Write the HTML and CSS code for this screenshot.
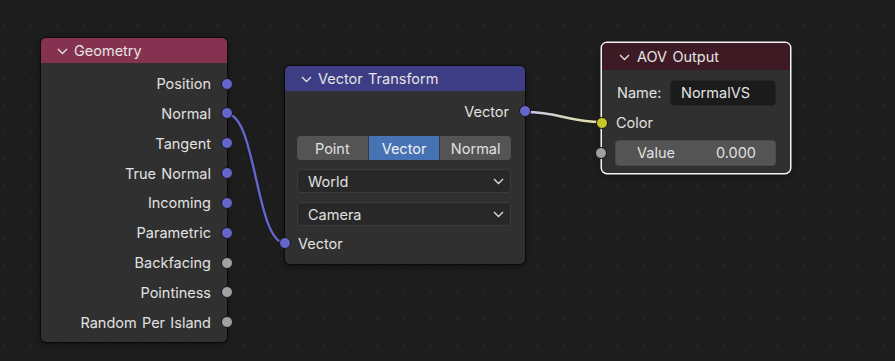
FILE: index.html
```html
<!DOCTYPE html>
<html>
<head>
<meta charset="utf-8">
<link rel="stylesheet" href="styles.css">
</head>
<body>
<div class="canvas">
  <svg class="links" width="895" height="361" viewBox="0 0 895 361">
    <defs>
      <linearGradient id="lg" x1="525" y1="0" x2="602" y2="0" gradientUnits="userSpaceOnUse">
        <stop offset="0" stop-color="#c6c6ee"/>
        <stop offset="1" stop-color="#e4e49c"/>
      </linearGradient>
    </defs>
    <path d="M227 114 C 256 114, 256 243, 285 243" stroke="#1a1a1a" stroke-width="4" fill="none"/>
    <path d="M227 114 C 256 114, 256 243, 285 243" stroke="#6565cc" stroke-width="2.4" fill="none"/>
    <path d="M525 112 C 560 112, 567 122, 602 122" stroke="#1a1a1a" stroke-width="4.5" fill="none"/>
    <path d="M525 112 C 560 112, 567 122, 602 122" stroke="url(#lg)" stroke-width="2.6" fill="none"/>
  </svg>

  <div class="node geometry">
    <div class="head head-input">
      <svg class="chev" width="11" height="7" viewBox="0 0 11 7"><polyline points="1,1 5.5,5.5 10,1" fill="none" stroke="#e0e0e0" stroke-width="1.4"/></svg>
      <span>Geometry</span>
    </div>
    <div class="body geo-body">
      <div class="row out">Position<i class="sock vec"></i></div>
      <div class="row out">Normal<i class="sock vec"></i></div>
      <div class="row out">Tangent<i class="sock vec"></i></div>
      <div class="row out">True Normal<i class="sock vec"></i></div>
      <div class="row out">Incoming<i class="sock vec"></i></div>
      <div class="row out">Parametric<i class="sock vec"></i></div>
      <div class="row out">Backfacing<i class="sock flt"></i></div>
      <div class="row out">Pointiness<i class="sock flt"></i></div>
      <div class="row out">Random Per Island<i class="sock flt"></i></div>
    </div>
  </div>

  <div class="node vtrans">
    <div class="head head-vector">
      <svg class="chev" width="11" height="7" viewBox="0 0 11 7"><polyline points="1,1 5.5,5.5 10,1" fill="none" stroke="#e0e0e0" stroke-width="1.4"/></svg>
      <span>Vector Transform</span>
    </div>
    <div class="body vt-body">
      <div class="row out">Vector<i class="sock vec"></i></div>
      <div class="seg">
        <div class="segbtn">Point</div>
        <div class="segbtn active">Vector</div>
        <div class="segbtn">Normal</div>
      </div>
      <div class="drop first">World<svg width="11" height="7" viewBox="0 0 11 7"><polyline points="1,1 5.5,5.5 10,1" fill="none" stroke="#d8d8d8" stroke-width="1.4"/></svg></div>
      <div class="drop">Camera<svg width="11" height="7" viewBox="0 0 11 7"><polyline points="1,1 5.5,5.5 10,1" fill="none" stroke="#d8d8d8" stroke-width="1.4"/></svg></div>
      <div class="row in">Vector<i class="sock vec"></i></div>
    </div>
  </div>

  <div class="node aov">
    <div class="head head-output">
      <svg class="chev" width="11" height="7" viewBox="0 0 11 7"><polyline points="1,1 5.5,5.5 10,1" fill="none" stroke="#e0e0e0" stroke-width="1.4"/></svg>
      <span>AOV Output</span>
    </div>
    <div class="body aov-body">
      <div class="namerow"><span>Name:</span><div class="textfield">NormalVS</div></div>
      <div class="row in">Color<i class="sock col"></i></div>
      <div class="valrow"><div class="valfield"><span>Value</span><span>0.000</span></div><i class="sock flt"></i></div>
    </div>
  </div>
</div>
</body>
</html>
```

FILE: styles.css
```css
html, body {
  margin: 0;
  padding: 0;
}
body {
  width: 895px;
  height: 361px;
  overflow: hidden;
  background-color: #1d1d1d;
  background-image: radial-gradient(circle, #272727 0.9px, rgba(0,0,0,0) 1.4px);
  background-size: 26.67px 26.67px;
  background-position: -9px 12px;
  font-family: Inter, "Noto Sans", sans-serif;
  font-size: 14.5px;
  word-spacing: 1.2px;
  color: #e2e2e2;
}
.canvas {
  position: relative;
  width: 895px;
  height: 361px;
}
.links {
  position: absolute;
  left: 0;
  top: 0;
  z-index: 2;
  pointer-events: none;
}
.node {
  position: absolute;
  background: #303030;
  border-radius: 5px;
  box-shadow: 0 0 1px 1px rgba(0,0,0,0.55), 0 2px 6px rgba(0,0,0,0.45);
  display: flex;
  flex-direction: column;
  box-sizing: border-box;
}
.geometry { left: 41px; top: 38px; width: 186px; height: 304px; }
.vtrans { left: 285px; top: 66px; width: 240px; height: 198px; }
.aov {
  left: 602px; top: 43px; width: 188px; height: 130px;
  box-shadow: 0 0 0 1.5px #f4f4f4, 0 2px 6px rgba(0,0,0,0.5);
}
.head {
  height: 25px;
  display: flex;
  align-items: center;
  border-radius: 5px 5px 0 0;
  padding-left: 16px;
  gap: 6px;
  color: #e4e4e4;
  flex-shrink: 0;
}
.head .chev { margin-top: 1px; }
.head-input { background: #853250; }
.head-vector { background: #3d3d85; }
.head-output { background: #3e1b24; height: 27px; padding-left: 17px; gap: 7px; }
.body {
  position: relative;
  display: flex;
  flex-direction: column;
}
.geo-body { padding-top: 5.6px; }
.row {
  height: 29.85px;
  display: flex;
  align-items: center;
  position: relative;
}
.row.out {
  justify-content: flex-end;
  padding-right: 16px;
}
.row.in {
  padding-left: 13px;
}
.sock {
  position: absolute;
  width: 10px;
  height: 10px;
  border-radius: 50%;
  border: 1px solid #151515;
  top: 50%;
  margin-top: -6px;
  z-index: 3;
}
.row.out .sock { right: -6px; }
.row.in .sock { left: -6px; }
.vec { background: #6565cc; }
.flt { background: #a1a1a1; }
.col { background: #c7c729; }

.vt-body { padding-top: 5px; }
.vt-body .row { height: 30px; }
.seg {
  display: flex;
  margin: 10px 14px 0 12px;
  height: 24px;
  border-radius: 4px;
  overflow: hidden;
  background: #3a3a3a;
  gap: 1px;
}
.segbtn {
  flex: 1;
  background: #545454;
  display: flex;
  align-items: center;
  justify-content: center;
  color: #e0e0e0;
}
.segbtn.active {
  background: #4772b3;
  color: #f2f2f2;
}
.drop {
  margin: 9px 14px 0 12px;
  height: 24px;
  box-sizing: border-box;
  border: 1px solid #3c3c3c;
  background: #282828;
  border-radius: 4px;
  display: flex;
  align-items: center;
  justify-content: space-between;
  padding: 0 6px 0 10px;
  color: #e0e0e0;
}
.drop + .row { margin-top: 2px; }

.aov-body { padding-top: 9px; }
.namerow {
  display: flex;
  align-items: center;
  justify-content: space-between;
  padding: 0 14px 0 15px;
  height: 27px;
}
.textfield {
  width: 106px;
  height: 26px;
  box-sizing: border-box;
  background: #1b1b1b;
  border-radius: 4px;
  border: 1px solid #262626;
  display: flex;
  align-items: center;
  padding-left: 10px;
  color: #e4e4e4;
}
.aov-body .row.in { height: 33px; padding-left: 14px; }
.valrow {
  position: relative;
  padding: 0 14px 0 13px;
  height: 27px;
  display: flex;
  align-items: center;
}
.valfield {
  flex: 1;
  height: 26px;
  box-sizing: border-box;
  background: #545454;
  border-radius: 4px;
  border: 1px solid #4a4a4a;
  display: flex;
  align-items: center;
  justify-content: space-between;
  padding: 0 19px 0 21px;
  color: #e0e0e0;
}
.valrow .sock { left: -7px; }
```
